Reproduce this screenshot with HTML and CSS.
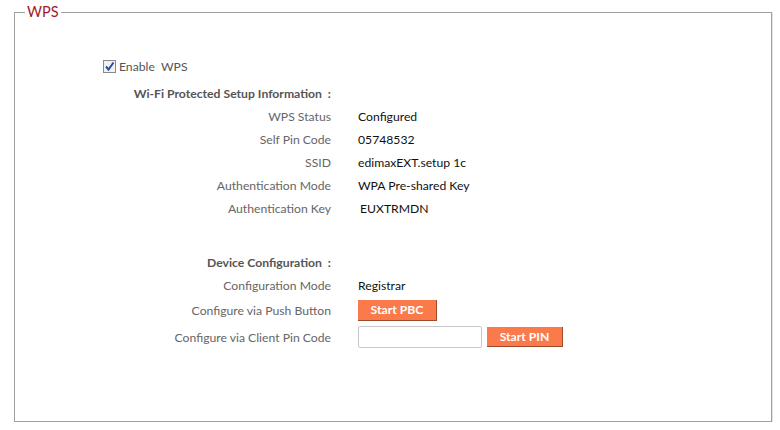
FILE: index.html
```html
<!DOCTYPE html>
<html lang="en">
<head>
    <meta charset="UTF-8">
    <title>WPS</title>
    <link rel="stylesheet" href="styles.css">
</head>
<body>

<fieldset class="panel">
    <legend>WPS</legend>

    <div class="enable">
        <span class="check">
            <svg width="11" height="11" viewBox="0 0 11 11"><path d="M2 5.5 L4.5 8.5 L9.5 1.5" fill="none" stroke="#2b4f8f" stroke-width="2"/></svg>
        </span>
        <span>Enable&nbsp; WPS</span>
    </div>

    <div class="row heading first">
        <div class="label">Wi-Fi Protected Setup Information &nbsp;:</div>
    </div>
    <div class="row">
        <div class="label">WPS Status</div>
        <div class="value">Configured</div>
    </div>
    <div class="row">
        <div class="label">Self Pin Code</div>
        <div class="value">05748532</div>
    </div>
    <div class="row">
        <div class="label">SSID</div>
        <div class="value">edimaxEXT.setup 1c</div>
    </div>
    <div class="row">
        <div class="label">Authentication Mode</div>
        <div class="value">WPA Pre-shared Key</div>
    </div>
    <div class="row">
        <div class="label">Authentication Key</div>
        <div class="value indent">EUXTRMDN</div>
    </div>

    <div class="row heading second">
        <div class="label">Device Configuration &nbsp;:</div>
    </div>
    <div class="row">
        <div class="label">Configuration Mode</div>
        <div class="value">Registrar</div>
    </div>
    <div class="row tall">
        <div class="label">Configure via Push Button</div>
        <div class="value"><button class="btn pbc">Start PBC</button></div>
    </div>
    <div class="row taller">
        <div class="label">Configure via Client Pin Code</div>
        <div class="value">
            <input type="text" class="pin-input">
            <button class="btn pin">Start PIN</button>
        </div>
    </div>
</fieldset>

</body>
</html>
```

FILE: styles.css
```css
body {
    margin: 0;
    padding: 4px 0 0 14px;
    background-color: #fff;
    font-family: Lato, "Open Sans", sans-serif;
    font-size: 12.2px;
    color: #666;
}

.panel {
    width: 758px;
    box-sizing: border-box;
    margin: 0;
    padding: 0 0 70px 0;
    border: 1px solid #a0a0a0;
    box-shadow: 1px 1px 0 #e4e4e4;
}

.panel legend {
    margin-left: 10px;
    padding: 0 2px;
    font-size: 14.5px;
    line-height: 16px;
    color: #a3192b;
}

.enable {
    display: flex;
    align-items: center;
    height: 20px;
    margin: 36px 0 0 88px;
    color: #555;
}

.check {
    width: 11px;
    height: 11px;
    border: 1px solid #8a8a8a;
    background-color: #eef2f8;
    margin-right: 3px;
    display: flex;
}

.row {
    display: flex;
    align-items: center;
    height: 23px;
}

.row.first {
    margin-top: 6px;
}

.row.second {
    margin-top: 31px;
}

.row.tall {
    height: 26px;
}

.row.taller {
    height: 28px;
}

.label {
    width: 316px;
    text-align: right;
}

.heading .label {
    font-weight: bold;
    color: #555;
}

.value {
    margin-left: 27px;
    color: #111;
    display: flex;
    align-items: center;
}

.value.indent {
    padding-left: 2px;
}

.btn {
    border: none;
    border-right: 1px solid #a04a2a;
    border-bottom: 1px solid #a04a2a;
    background-color: #fb7a4c;
    color: #fff;
    font-family: Lato, "Open Sans", sans-serif;
    font-weight: bold;
    font-size: 12.2px;
    padding: 0;
}

.pbc {
    width: 79px;
    height: 21px;
}

.pin {
    width: 76px;
    height: 20px;
    margin-left: 5px;
}

.pin-input {
    width: 124px;
    height: 22px;
    box-sizing: border-box;
    border: 1px solid #c8c8c8;
    border-radius: 2px;
    margin: 0;
}
```
